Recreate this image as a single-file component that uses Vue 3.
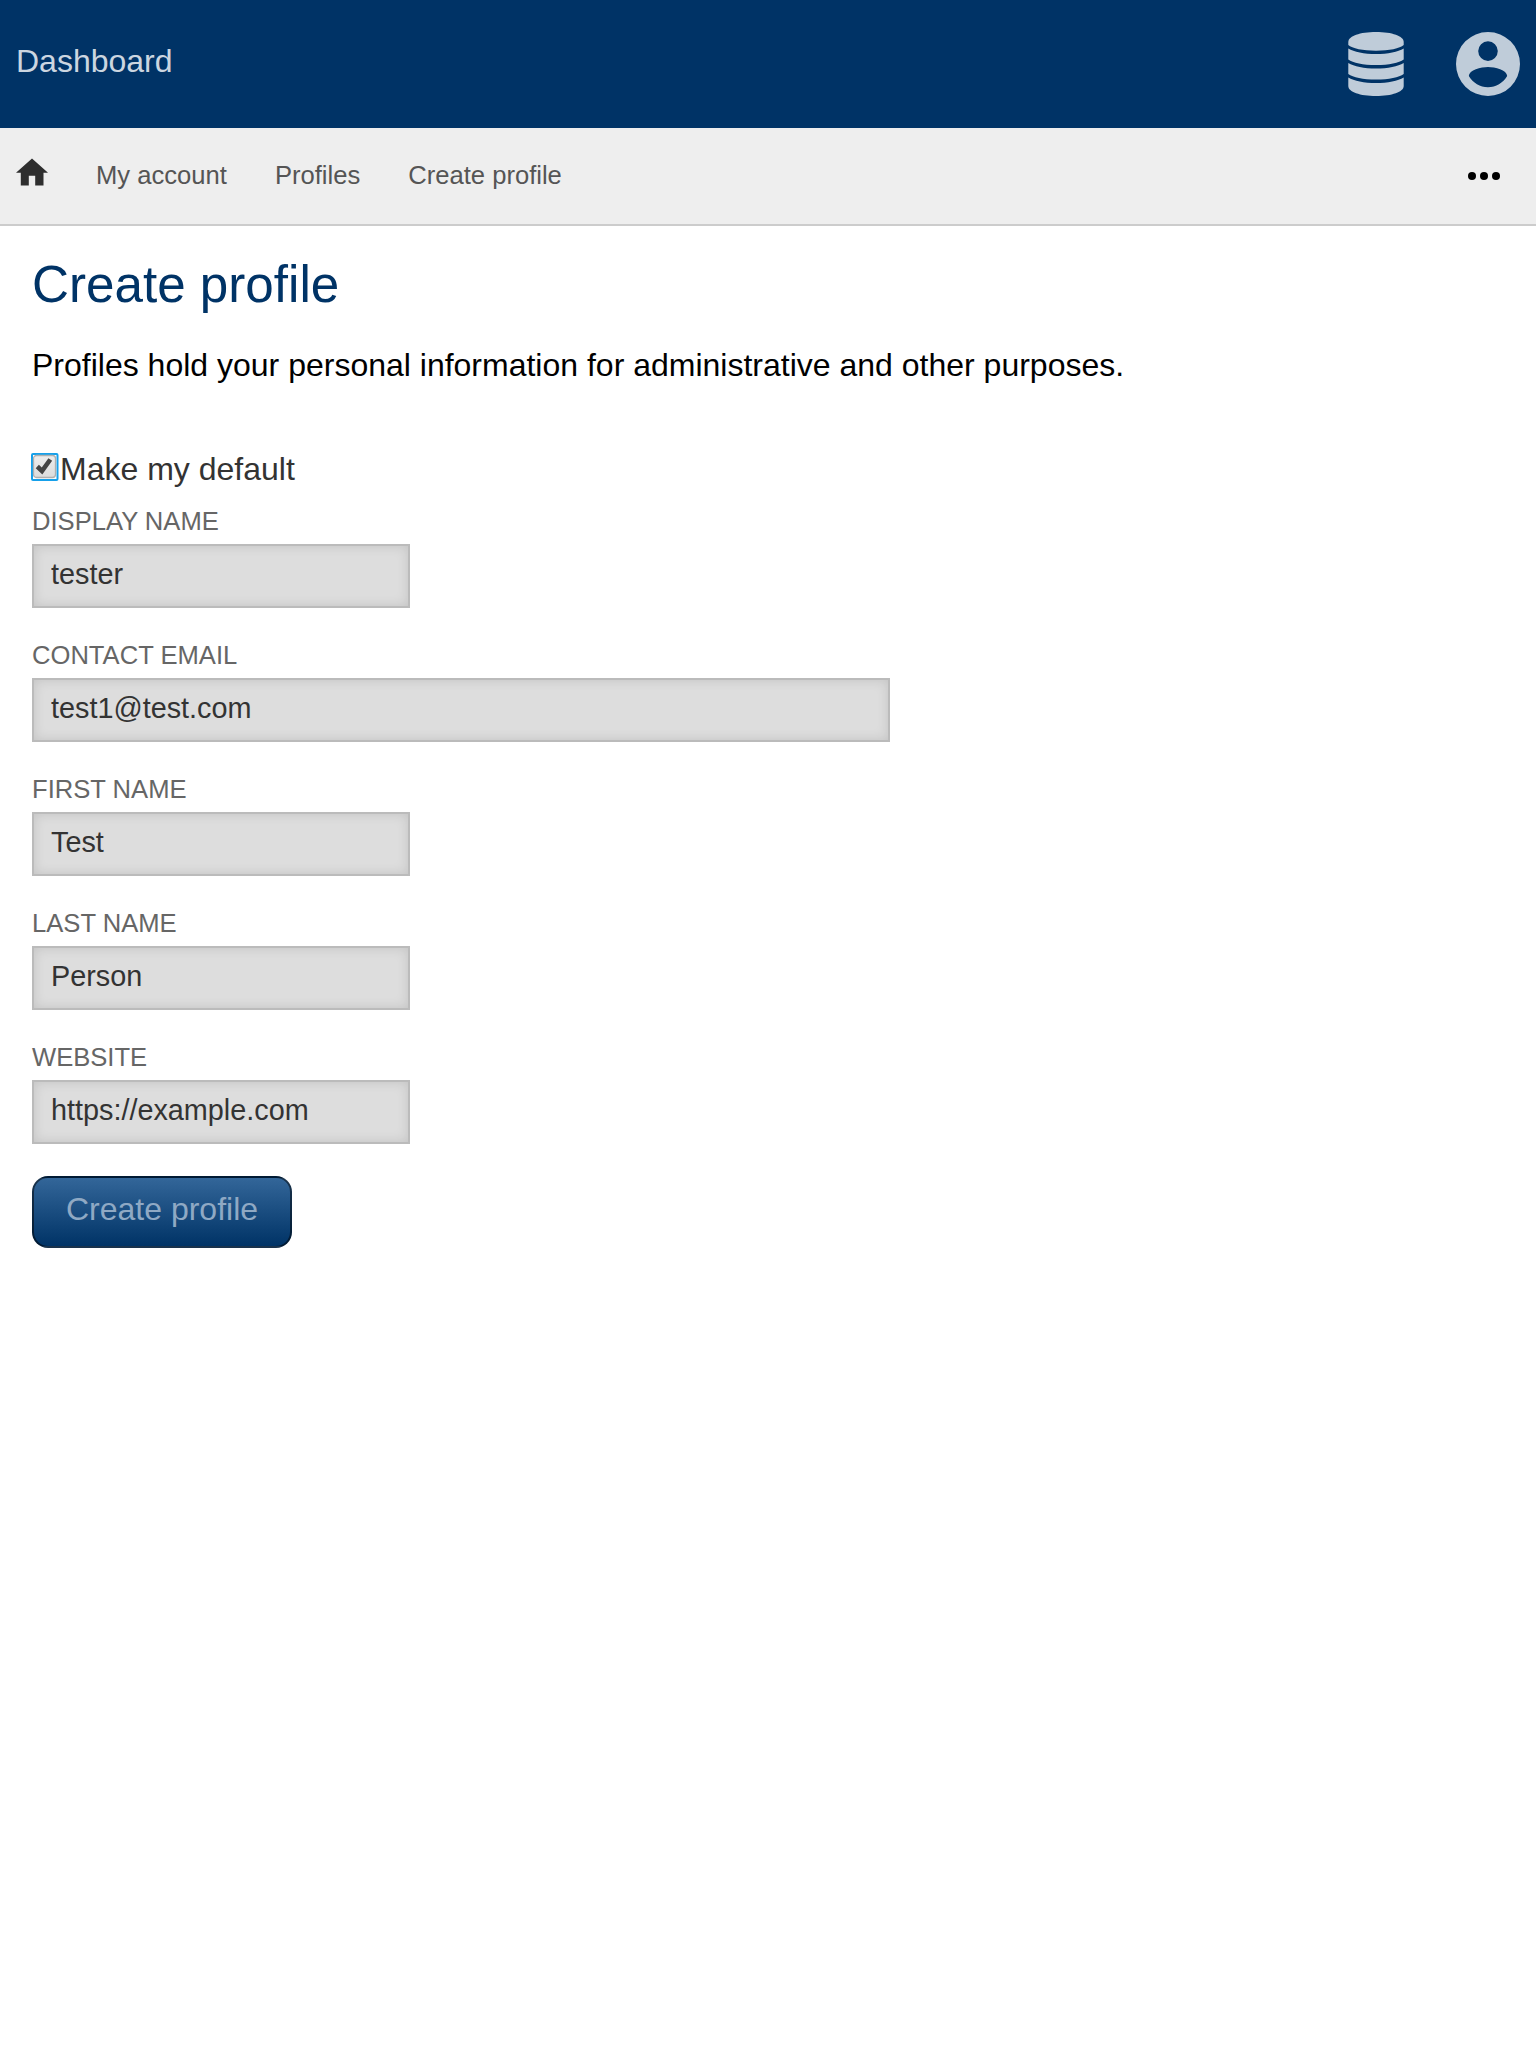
<script setup>
import { reactive, ref } from 'vue'

const crumbs = ['My account', 'Profiles', 'Create profile']
const isDefault = ref(true)
const fields = reactive([
  { id: 'display', label: 'Display name', value: 'tester' },
  { id: 'email', label: 'Contact email', value: 'test1@test.com', wide: true },
  { id: 'first', label: 'First name', value: 'Test' },
  { id: 'last', label: 'Last name', value: 'Person' },
  { id: 'website', label: 'Website', value: 'https://example.com' },
])
</script>

<template>
  <div class="page">
    <header class="topbar">
      <a class="brand">Dashboard</a>
      <div class="actions">
        <svg width="56" height="64" viewBox="0 0 56 64">
          <path d="M0.300 10C0.300 4 12 0 28 0s27.700 4 27.700 10v3C52 16.500 41 18.700 28 18.700S4 16.500 0.300 13z" />
          <path d="M0.300 16.500C6 20 16 22 28 22s22-2 27.700-5.500v11C51 31 41 33 28 33S5 31 0.300 27.500z" />
          <path d="M0.300 31C6 34.500 16 36.500 28 36.500s22-2 27.700-5.500v11C51 45.500 41 47.500 28 47.500S5 45.500 0.300 42z" />
          <path d="M0.300 45.500C6 49 16 51 28 51s22-2 27.700-5.500V54c0 6-11.700 10-27.700 10S0.300 60 0.300 54z" />
        </svg>
        <svg width="64" height="64" viewBox="0 0 64 64">
          <path fill-rule="evenodd" d="M32 0a32 32 0 1 1 0 64a32 32 0 0 1 0-64zM32 9.300a9.800 9.800 0 1 0 0 19.600a9.800 9.800 0 0 0 0-19.600zM12.800 44C17 51 24 55.200 32 55.200S47 51 51.200 44C51 38 39 35 32 35S13 38 12.800 44z" />
        </svg>
      </div>
    </header>

    <nav class="crumbs">
      <svg class="home" width="32" height="28" viewBox="0 0 32 28">
        <path d="M16 0.400L32 14.700H27.500V27.600H19.200V17.700H12.800V27.600H4.800V14.700H0z" />
      </svg>
      <a v-for="c in crumbs" :key="c" class="crumb">{{ c }}</a>
      <svg class="more" width="32" height="8" viewBox="0 0 32 8">
        <circle cx="4" cy="4" r="4" /><circle cx="16" cy="4" r="4" /><circle cx="28" cy="4" r="4" />
      </svg>
    </nav>

    <main>
      <h1>Create profile</h1>
      <p>Profiles hold your personal information for administrative and other purposes.</p>
      <form @submit.prevent>
        <label class="check">
          <input v-model="isDefault" type="checkbox" />
          <svg width="28" height="28" viewBox="0 0 28 28">
            <defs>
              <linearGradient id="box-fill" x1="0" y1="0" x2="0" y2="1">
                <stop offset="0" stop-color="#ededed" />
                <stop offset="1" stop-color="#dcdcdc" />
              </linearGradient>
            </defs>
            <rect x="1" y="1" width="25.500" height="26" rx="1" fill="#fff" stroke="#16a0ea" stroke-width="2" />
            <rect x="2.500" y="2.500" width="22" height="22" rx="3" fill="url(#box-fill)" stroke="#b0b0b0" stroke-width="1.300" />
            <path v-if="isDefault" d="M6.300 13.500L11 18L19.300 6.500" fill="none" stroke="#444" stroke-width="4.600" />
          </svg>
          <span>Make my default</span>
        </label>
        <div v-for="f in fields" :key="f.id" class="field">
          <label :for="f.id">{{ f.label }}</label>
          <input :id="f.id" v-model="f.value" type="text" :class="{ wide: f.wide }" />
        </div>
        <button type="submit">Create profile</button>
      </form>
    </main>
  </div>
</template>

<style>
body {
  margin: 0;
  background: #fff;
}
</style>

<style scoped>
.page {
  min-height: 2048px;
  font-family: "Liberation Sans", Arial, sans-serif;
  font-size: 32px;
  color: #000;
}
.topbar {
  box-sizing: border-box;
  height: 128px;
  padding: 0 16px;
  display: flex;
  justify-content: space-between;
  background: #003366;
}
.brand {
  line-height: 122px;
  color: #ccd6e0;
}
.actions {
  display: flex;
  align-items: center;
  gap: 52px;
  fill: #bfccd9;
}
.crumbs {
  display: flex;
  align-items: center;
  height: 96px;
  padding: 0 36px 0 16px;
  background: #eee;
  border-bottom: 2px solid #ccc;
  font-size: 25.6px;
}
.home {
  fill: #2e2e2e;
  margin-bottom: 8px;
}
.crumb {
  margin-left: 48px;
  line-height: 94px;
  padding-bottom: 2px;
  color: #555;
}
.more {
  margin-left: auto;
}
main {
  padding: 29px 32px 0;
}
h1 {
  margin: 0;
  font-size: 51.2px;
  font-weight: 400;
  line-height: 60px;
  color: #003366;
}
p {
  margin: 30px 0 64px;
  line-height: 40px;
}
.check {
  display: flex;
  height: 40px;
  margin-left: -1px;
  line-height: 40px;
  color: #333;
}
.check input {
  position: absolute;
  opacity: 0;
}
.check svg {
  margin: 4px 1px 0 0;
}
.field {
  display: flex;
  flex-direction: column;
  align-items: flex-start;
  margin-bottom: 31px;
}
.check + .field {
  margin-top: 16px;
}
.field label {
  margin-bottom: 7px;
  font-size: 25.6px;
  line-height: 32px;
  text-transform: uppercase;
  color: #666;
}
.field input {
  box-sizing: border-box;
  width: 378px;
  height: 64px;
  margin: 0;
  padding: 0 17px 4px;
  appearance: none;
  border: 2px solid #bbb;
  border-radius: 0;
  background: #ddd;
  box-shadow: inset 0 0 12px rgba(0, 0, 0, 0.12);
  font: 28.8px/56px "Liberation Sans", Arial, sans-serif;
  color: #333;
}
.field input.wide {
  width: 858px;
}
button {
  display: block;
  box-sizing: border-box;
  width: 260px;
  height: 72px;
  margin: 32px 0 0;
  padding: 0 0 6px;
  border: 2px solid rgba(0, 0, 0, 0.5);
  border-radius: 16px;
  background: linear-gradient(#336699, #003366);
  font: 32px "Liberation Sans", Arial, sans-serif;
  color: #8fa9c4;
}
</style>
